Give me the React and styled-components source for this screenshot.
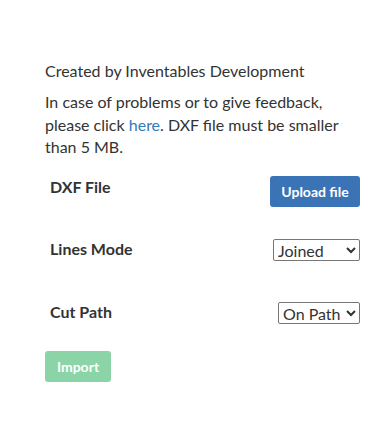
import React from 'react';
import styled, { createGlobalStyle } from 'styled-components';

const LinkBlue = '#337ab7';
const TextColor = '#333333';

const GlobalStyle = createGlobalStyle`
  body {
    margin: 0;
    background: #ffffff;
    font-family: Lato, "Open Sans", sans-serif;
    color: ${TextColor};
  }
`;

const Panel = styled.div`
  padding: 60px 21px 0 45px;
  font-size: 16px;
  line-height: 22.5px;
`;

const Credit = styled.p`
  margin: 0 0 8.5px 0;
`;

const Note = styled.p`
  margin: 0 0 17.5px 0;
`;

const Link = styled.a`
  color: ${LinkBlue};
  text-decoration: none;
`;

const Row = styled.div`
  display: flex;
  align-items: ${props => (props.top ? 'flex-start' : 'center')};
  justify-content: space-between;
  padding-left: 5px;
  height: 30px;
  margin-bottom: ${props => props.gap}px;
`;

const Label = styled.span`
  font-weight: 700;
  color: ${TextColor};
`;

const UploadButton = styled.button`
  background: #3a74b7;
  color: #ffffff;
  border: none;
  border-radius: 3px;
  height: 31px;
  width: 90px;
  padding: 0;
  font-family: Lato, sans-serif;
  font-weight: 700;
  font-size: 14px;
`;

const Select = styled.select`
  width: ${props => props.w}px;
  height: 22px;
  font-family: Lato, sans-serif;
  font-size: 16px;
  color: ${TextColor};
  border: 1px solid #767676;
  border-radius: 2px;
  background: #ffffff;
  padding: 0;
`;

const ImportButton = styled.button`
  background: #8ad4a8;
  color: #ffffff;
  border: none;
  border-radius: 3px;
  height: 31px;
  width: 66px;
  font-family: Lato, sans-serif;
  font-weight: 700;
  font-size: 14px;
`;

export default function App() {
  return (
    <Panel>
      <GlobalStyle />
      <Credit>Created by Inventables Development</Credit>
      <Note>
        In case of problems or to give feedback, please click <Link href="#">here</Link>. DXF file must be smaller than 5 MB.
      </Note>
      <Row top gap={28.5}>
        <Label>DXF File</Label>
        <UploadButton>Upload file</UploadButton>
      </Row>
      <Row gap={33}>
        <Label>Lines Mode</Label>
        <Select w={87} defaultValue="joined">
          <option value="joined">Joined</option>
          <option value="separate">Separate</option>
        </Select>
      </Row>
      <Row gap={23.5}>
        <Label>Cut Path</Label>
        <Select w={82} defaultValue="on">
          <option value="on">On Path</option>
          <option value="outside">Outside</option>
          <option value="inside">Inside</option>
        </Select>
      </Row>
      <ImportButton disabled>Import</ImportButton>
    </Panel>
  );
}
